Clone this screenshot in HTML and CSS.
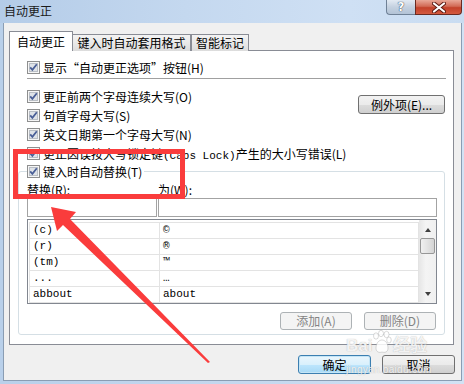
FILE: index.html
```html
<!DOCTYPE html>
<html lang="zh-CN">
<head>
    <meta charset="UTF-8">
    <link rel="stylesheet" href="styles.css">
    <title>自动更正</title>
</head>
<body>
    <div class="window">
        <div class="titlebar">
            <span class="title">自动更正</span>
            <div class="caption-btns">
                <span class="cap-help">?</span>
                <span class="cap-close">
                    <svg width="14" height="11" viewBox="0 0 14 11"><path d="M2 1.5 L12 9.5 M12 1.5 L2 9.5" stroke="#5a1a12" stroke-width="4" stroke-linecap="round"/><path d="M2 1.5 L12 9.5 M12 1.5 L2 9.5" stroke="#fff" stroke-width="2.2" stroke-linecap="round"/></svg>
                </span>
            </div>
        </div>
        <div class="client">
            <div class="tabs">
                <div class="tab tab-active">自动更正</div>
                <div class="tab tab-format">键入时自动套用格式</div>
                <div class="tab tab-smart">智能标记</div>
            </div>
            <div class="panel">
                <div class="row">
                    <svg class="cb" width="13" height="13" viewBox="0 0 13 13"><rect x="0.5" y="0.5" width="12" height="12" fill="#f6f6f6" stroke="#8e8f8f"/><rect x="2.5" y="2.5" width="8" height="8" fill="#dfe3e8" stroke="#b9bec5"/><path d="M3.2 6.3 L5.4 8.8 L9.8 3.2" fill="none" stroke="#4a5f97" stroke-width="1.8"/></svg>
                    <span>显示“自动更正选项”按钮(H)</span>
                </div>
                <div class="sep"></div>
                <div class="opts">
                    <div class="checks">
                        <div class="row">
                            <svg class="cb" width="13" height="13" viewBox="0 0 13 13"><rect x="0.5" y="0.5" width="12" height="12" fill="#f6f6f6" stroke="#8e8f8f"/><rect x="2.5" y="2.5" width="8" height="8" fill="#dfe3e8" stroke="#b9bec5"/><path d="M3.2 6.3 L5.4 8.8 L9.8 3.2" fill="none" stroke="#4a5f97" stroke-width="1.8"/></svg>
                            <span>更正前两个字母连续大写(O)</span>
                        </div>
                        <div class="row">
                            <svg class="cb" width="13" height="13" viewBox="0 0 13 13"><rect x="0.5" y="0.5" width="12" height="12" fill="#f6f6f6" stroke="#8e8f8f"/><rect x="2.5" y="2.5" width="8" height="8" fill="#dfe3e8" stroke="#b9bec5"/><path d="M3.2 6.3 L5.4 8.8 L9.8 3.2" fill="none" stroke="#4a5f97" stroke-width="1.8"/></svg>
                            <span>句首字母大写(S)</span>
                        </div>
                        <div class="row">
                            <svg class="cb" width="13" height="13" viewBox="0 0 13 13"><rect x="0.5" y="0.5" width="12" height="12" fill="#f6f6f6" stroke="#8e8f8f"/><rect x="2.5" y="2.5" width="8" height="8" fill="#dfe3e8" stroke="#b9bec5"/><path d="M3.2 6.3 L5.4 8.8 L9.8 3.2" fill="none" stroke="#4a5f97" stroke-width="1.8"/></svg>
                            <span>英文日期第一个字母大写(N)</span>
                        </div>
                        <div class="row">
                            <svg class="cb" width="13" height="13" viewBox="0 0 13 13"><rect x="0.5" y="0.5" width="12" height="12" fill="#f6f6f6" stroke="#8e8f8f"/><rect x="2.5" y="2.5" width="8" height="8" fill="#dfe3e8" stroke="#b9bec5"/><path d="M3.2 6.3 L5.4 8.8 L9.8 3.2" fill="none" stroke="#4a5f97" stroke-width="1.8"/></svg>
                            <span>更正因误按大写锁定键<span class="en">(Caps Lock)</span>产生的大小写错误(L)</span>
                        </div>
                    </div>
                    <button class="btn btn-except">例外项(E)...</button>
                </div>

                <div class="group">
                    <div class="row legend">
                        <svg class="cb" width="13" height="13" viewBox="0 0 13 13"><rect x="0.5" y="0.5" width="12" height="12" fill="#f6f6f6" stroke="#8e8f8f"/><rect x="2.5" y="2.5" width="8" height="8" fill="#dfe3e8" stroke="#b9bec5"/><path d="M3.2 6.3 L5.4 8.8 L9.8 3.2" fill="none" stroke="#4a5f97" stroke-width="1.8"/></svg>
                        <span>键入时自动替换(T)</span>
                    </div>
                    <div class="labels">
                        <span class="lbl-from">替换(R):</span>
                        <span>为(W):</span>
                    </div>
                    <div class="inputs">
                        <div class="input input-from"></div>
                        <div class="input input-to"></div>
                    </div>
                    <div class="list">
                        <div class="entries">
                            <div class="entry"><span class="col-from">(c)</span><span class="col-to">©</span></div>
                            <div class="entry"><span class="col-from">(r)</span><span class="col-to">®</span></div>
                            <div class="entry"><span class="col-from">(tm)</span><span class="col-to">™</span></div>
                            <div class="entry"><span class="col-from">...</span><span class="col-to">…</span></div>
                            <div class="entry"><span class="col-from">abbout</span><span class="col-to">about</span></div>
                        </div>
                        <div class="scrollbar">
                            <span class="sb-arrow sb-up"></span>
                            <span class="sb-thumb"></span>
                            <span class="sb-arrow sb-down"></span>
                        </div>
                    </div>
                    <div class="list-btns">
                        <button class="btn" disabled>添加(A)</button>
                        <button class="btn" disabled>删除(D)</button>
                    </div>
                </div>
            </div>
            <div class="footer">
                <button class="btn btn-default">确定</button>
                <button class="btn">取消</button>
            </div>
        </div>
    </div>

    <!-- annotation drawn over the screenshot -->
    <div class="mark-box"></div>
    <svg class="arrow" width="464" height="384" viewBox="0 0 464 384">
        <polygon points="51,207 76,212 70,219 210,362 208,363 63,225 57,231" fill="#fa3c3c"/>
    </svg>

    <div class="watermark">
        <div class="wm-logo">Bai<span class="wm-paw">
            <svg width="20" height="26" viewBox="0 0 20 26"><g fill="rgba(255,255,255,0.85)" stroke="rgba(150,150,150,0.45)" stroke-width="0.8"><ellipse cx="4" cy="6" rx="2.5" ry="3.2"/><ellipse cx="9" cy="3.5" rx="2.5" ry="3.2"/><ellipse cx="14.5" cy="4.5" rx="2.5" ry="3.2"/><ellipse cx="17" cy="10" rx="2.3" ry="3"/><path d="M4 18 C4 12 8 10 10 10 C13 10 16 13 16 18 C16 22 13 23 10 22 C7 23 4 22 4 18 Z"/></g></svg>
        </span>经验</div>
        <div class="wm-url">jingyan.baidu.com</div>
    </div>
</body>
</html>
```

FILE: styles.css
```css
* {
    box-sizing: border-box;
}

body {
    margin: 0;
    width: 464px;
    height: 384px;
    overflow: hidden;
    position: relative;
    font-family: "Noto Sans CJK SC", sans-serif;
    font-size: 12px;
    color: #000;
}

.window {
    width: 464px;
    height: 384px;
    display: flex;
    flex-direction: column;
    background: linear-gradient(90deg, #b9d0ea, #c6d9ef 60%, #d2e2f4);
}

/* title bar */
.titlebar {
    height: 23px;
    display: flex;
    justify-content: space-between;
    align-items: flex-start;
    background: linear-gradient(90deg, #b4cce8, #c4d8ef 40%, #cfe0f4 75%, #c9dcf1);
}

.title {
    padding: 4px 0 0 4px;
    line-height: 14px;
    font-size: 12px;
    color: #1a1a1a;
}

.caption-btns {
    display: flex;
    margin-right: 2px;
}

.cap-help {
    width: 29px;
    height: 15px;
    border: 1px solid #6f8196;
    border-top: none;
    border-right: none;
    border-radius: 0 0 0 4px;
    background: linear-gradient(#e3eaf3, #c4d1e0 50%, #b3c3d6);
    color: #fff;
    font-family: "DejaVu Sans", sans-serif;
    font-weight: bold;
    font-size: 12px;
    line-height: 14px;
    text-align: center;
    text-shadow: 0 0 1px #2f3e52, 0 0 1px #2f3e52;
}

.cap-close {
    width: 47px;
    height: 15px;
    border: 1px solid #6a2a21;
    border-top: none;
    border-radius: 0 0 4px 0;
    background: linear-gradient(#e9a898, #d26a55 45%, #c3412a 55%, #d45a40);
    display: flex;
    align-items: center;
    justify-content: center;
}

/* client area */
.client {
    flex: 1;
    margin: 0 2px 3px 3px;
    border: 1px solid #8a9db3;
    border-top: none;
    background: #f0f0f0;
    padding: 8px 6px 0 5px;
}

.tabs {
    display: flex;
    align-items: flex-end;
    height: 20px;
    margin-bottom: -1px;
    position: relative;
    z-index: 1;
}

.tab {
    height: 17px;
    border: 1px solid #898c95;
    border-bottom: none;
    background: linear-gradient(#f3f3f3, #e9e9e9 50%, #dcdcdc);
    line-height: 16px;
    text-align: center;
}

.tab-active {
    width: 64px;
    height: 20px;
    background: #fff;
    line-height: 20px;
}

.tab-format {
    width: 119px;
    margin-left: -1px;
}

.tab-smart {
    width: 58px;
}

.panel {
    width: 445px;
    height: 295px;
    border: 1px solid #898c95;
    background: #fff;
    padding: 7px 8px 0 17px;
}

.row {
    display: flex;
    align-items: center;
    gap: 3px;
    height: 19px;
    white-space: nowrap;
}

.cb {
    flex-shrink: 0;
}

.en {
    font-family: "Liberation Mono", monospace;
    font-size: 11px;
}

.sep {
    height: 2px;
    margin: 1px -1px 7px 0;
    border-top: 1px solid #a0a0a0;
    border-bottom: 1px solid #fff;
}

.opts {
    display: flex;
    justify-content: space-between;
    align-items: flex-start;
}

.btn {
    font-family: "Noto Sans CJK SC", sans-serif;
    font-size: 12px;
    height: 19px;
    padding: 0;
    border: 1px solid #707070;
    border-radius: 3px;
    background: linear-gradient(#f2f2f2, #ebebeb 50%, #dddddd 50%, #cfcfcf);
    color: #000;
    line-height: 16px;
}

.btn:disabled {
    border-color: #adb2b5;
    background: #f4f4f4;
    color: #838383;
}

.btn-except {
    width: 87px;
    margin-top: 8px;
}

.btn-default {
    border-color: #3c7fb1;
    background: linear-gradient(#eaf6fd, #d9f0fc 50%, #bee6fd 50%, #a7d9f5);
    box-shadow: inset 0 0 0 1px #c4e5f6;
}

/* replace group */
.group {
    margin: 8px 0 0 -9px;
    border: 1px solid #d5dfe5;
    border-radius: 3px;
    padding: 0 7px 4px 8px;
}

.legend {
    margin-top: -10px;
    width: fit-content;
    padding-right: 2px;
    background: #fff;
}

.labels {
    display: flex;
    height: 16px;
    align-items: center;
}

.lbl-from {
    width: 131px;
}

.inputs {
    display: flex;
    gap: 1px;
    margin-top: 1px;
}

.input {
    height: 19px;
    border: 1px solid #a3a3a3;
    background: #fff;
}

.input-from {
    width: 130px;
}

.input-to {
    flex: 1;
}

.list {
    margin-top: 2px;
    height: 85px;
    border: 1px solid #828790;
    display: flex;
    background: #fff;
}

.entries {
    flex: 1;
    margin: 2px 0 0 1px;
    border-top: 1px solid #e3e3e3;
    border-left: 1px solid #e3e3e3;
}

.entry {
    display: flex;
    height: 16px;
    border-bottom: 1px solid #e3e3e3;
    font-family: "Liberation Mono", monospace;
    font-size: 11px;
    line-height: 15px;
}

.col-from {
    width: 130px;
    padding-left: 3px;
    border-right: 1px solid #e3e3e3;
}

.col-to {
    flex: 1;
    padding-left: 3px;
    border-right: 1px solid #e3e3e3;
}

.scrollbar {
    width: 17px;
    display: flex;
    flex-direction: column;
    align-items: center;
    background: linear-gradient(90deg, #e6e6e6, #f4f4f4 40%, #f0f0f0);
}

.sb-arrow {
    width: 0;
    height: 0;
    border-left: 3.5px solid transparent;
    border-right: 3.5px solid transparent;
}

.sb-up {
    margin-top: 8px;
    border-bottom: 4px solid #404040;
}

.sb-thumb {
    width: 15px;
    height: 16px;
    margin-top: 6px;
    border: 1px solid #979797;
    border-radius: 2px;
    background: linear-gradient(90deg, #f0f0f0, #e3e3e3 50%, #d4d4d4);
}

.sb-down {
    margin-top: auto;
    margin-bottom: 7px;
    border-top: 4px solid #404040;
}

.list-btns {
    display: flex;
    justify-content: flex-end;
    gap: 12px;
    margin: 8px 1px 0 0;
}

.list-btns .btn {
    width: 72px;
    height: 18px;
}

.footer {
    display: flex;
    justify-content: flex-end;
    gap: 11px;
    margin-top: 10px;
}

.footer .btn {
    width: 73px;
}

/* red annotation */
.mark-box {
    position: absolute;
    left: 13px;
    top: 149px;
    width: 172px;
    height: 50px;
    border: 5px solid #fa3c3c;
}

.arrow {
    position: absolute;
    left: 0;
    top: 0;
    pointer-events: none;
}

/* site watermark */
.watermark {
    position: absolute;
    left: 346px;
    top: 326px;
    width: 92px;
    color: rgba(255, 255, 255, 0.85);
    text-shadow: 0 0 1px rgba(120, 120, 120, 0.6);
    font-family: "Liberation Sans", sans-serif;
}

.wm-logo {
    display: flex;
    align-items: flex-end;
    height: 30px;
    font-size: 17px;
    font-weight: bold;
    line-height: 20px;
}

.wm-paw {
    margin: 0 1px 0 0;
    display: flex;
}

.wm-url {
    margin-top: 8px;
    font-size: 10px;
    letter-spacing: 0.3px;
}
```
